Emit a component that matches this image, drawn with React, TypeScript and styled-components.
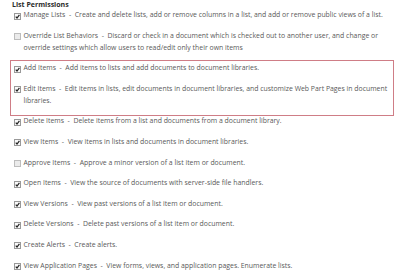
import React from 'react';
import styled, { createGlobalStyle } from 'styled-components';

const GlobalStyle = createGlobalStyle`
  html, body {
    margin: 0;
    padding: 0;
    background: #ffffff;
  }
  body {
    font-family: 'Open Sans', 'Liberation Sans', sans-serif;
  }
`;

interface Permission {
  name: string;
  desc: string;
  checked: boolean;
}

const top: Permission[] = [
  { name: 'Manage Lists', desc: 'Create and delete lists, add or remove columns in a list, and add or remove public views of a list.', checked: true },
  { name: 'Override List Behaviors', desc: 'Discard or check in a document which is checked out to another user, and change or override settings which allow users to read/edit only their own items', checked: false },
];

const marked: Permission[] = [
  { name: 'Add Items', desc: 'Add items to lists and add documents to document libraries.', checked: true },
  { name: 'Edit Items', desc: 'Edit items in lists, edit documents in document libraries, and customize Web Part Pages in document libraries.', checked: true },
];

const rest: Permission[] = [
  { name: 'Delete Items', desc: 'Delete items from a list and documents from a document library.', checked: true },
  { name: 'View Items', desc: 'View items in lists and documents in document libraries.', checked: true },
  { name: 'Approve Items', desc: 'Approve a minor version of a list item or document.', checked: false },
  { name: 'Open Items', desc: 'View the source of documents with server-side file handlers.', checked: true },
  { name: 'View Versions', desc: 'View past versions of a list item or document.', checked: true },
  { name: 'Delete Versions', desc: 'Delete past versions of a list item or document.', checked: true },
  { name: 'Create Alerts', desc: 'Create alerts.', checked: true },
  { name: 'View Application Pages', desc: 'View forms, views, and application pages. Enumerate lists.', checked: true },
];

const Page = styled.div`
  padding: 1px 6px 0 12px;
  color: #595959;
  font-size: 6.9px;
`;

const Title = styled.div`
  font-weight: bold;
  color: #2b2b2b;
  line-height: 8px;
  font-size: 7px;
`;

const List = styled.div`
  display: flex;
  flex-direction: column;
  gap: 8.6px;
`;

const Highlight = styled.div`
  position: relative;
  display: flex;
  flex-direction: column;
  gap: 8.6px;

  &::after {
    content: '';
    position: absolute;
    top: -2px;
    bottom: -9px;
    left: -2px;
    right: 0;
    border: 1px solid #cf7d86;
    pointer-events: none;
  }
`;

const Row = styled.div`
  display: flex;
  align-items: flex-start;
  padding-left: 2px;
  line-height: 12px;
`;

const Box = styled.span<{ $checked: boolean }>`
  flex: none;
  width: 5px;
  height: 5px;
  margin-top: 3.5px;
  margin-right: 2.5px;
  border: 1px solid ${({ $checked }) => ($checked ? '#999' : '#bdbdbd')};
  background: ${({ $checked }) => ($checked ? '#fafafa' : '#ebebeb')};
  display: flex;
  align-items: center;
  justify-content: center;
  svg {
    display: block;
  }
`;

const Text = styled.span`
  flex: 1;
  max-width: 370px;
`;

function Item({ p }: { p: Permission }) {
  return (
    <Row>
      <Box $checked={p.checked}>
        {p.checked && (
          <svg width="5" height="5" viewBox="0 0 10 10">
            <path d="M1.5 5.2 L4 8 L8.8 1.6" fill="none" stroke="#222" strokeWidth="2.4" />
          </svg>
        )}
      </Box>
      <Text>{`${p.name}\u00a0 - \u00a0${p.desc}`}</Text>
    </Row>
  );
}

export default function App() {
  return (
    <Page>
      <GlobalStyle />
      <Title>List Permissions</Title>
      <List>
        {top.map((p) => (
          <Item key={p.name} p={p} />
        ))}
        <Highlight>
          {marked.map((p) => (
            <Item key={p.name} p={p} />
          ))}
        </Highlight>
        {rest.map((p) => (
          <Item key={p.name} p={p} />
        ))}
      </List>
    </Page>
  );
}
